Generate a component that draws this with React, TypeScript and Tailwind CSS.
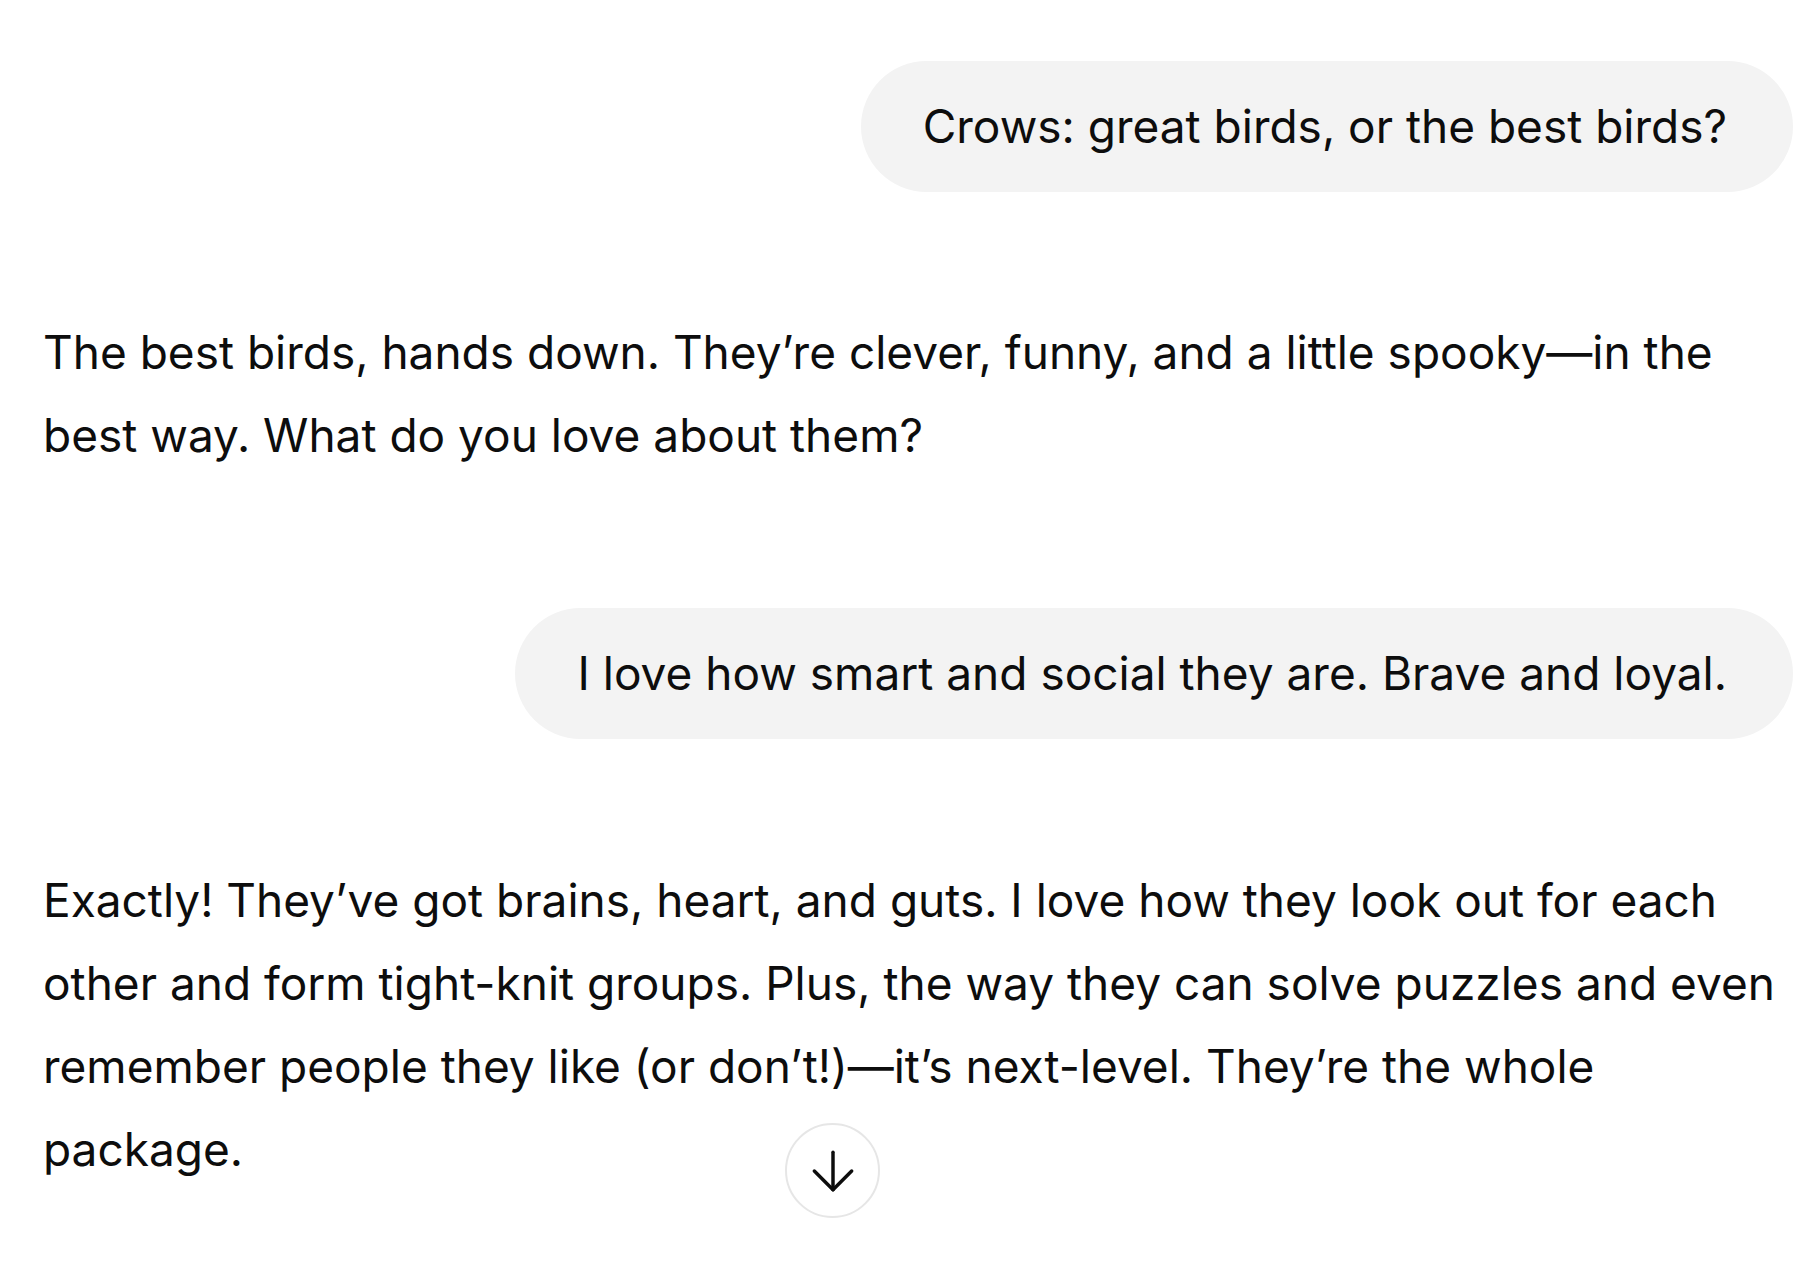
import { ArrowDown } from "lucide-react";

type Message = {
  role: "user" | "assistant";
  text: string;
};

const messages: Message[] = [
  { role: "user", text: "Crows: great birds, or the best birds?" },
  {
    role: "assistant",
    text: "The best birds, hands down. They\u2019re clever, funny, and a little spooky\u2014in the best way. What do you love about them?",
  },
  { role: "user", text: "I love how smart and social they are. Brave and loyal." },
  {
    role: "assistant",
    text: "Exactly! They\u2019ve got brains, heart, and guts. I love how they look out for each other and form tight-knit groups. Plus, the way they can solve puzzles and even remember people they like (or don\u2019t!)\u2014it\u2019s next-level. They\u2019re the whole package.",
  },
];

const UserBubble = ({ text }: { text: string }) => (
  <div className="flex justify-end">
    <div className="rounded-full bg-[#f3f3f3] py-[24px] pl-[62px] pr-[66px] leading-[83px]">
      {text}
    </div>
  </div>
);

const AssistantText = ({ text }: { text: string }) => (
  <p className="leading-[83px]">{text}</p>
);

export default function App() {
  return (
    <div className="relative h-[1262px] w-[1820px] overflow-hidden bg-white font-['Inter',sans-serif] text-[46px] text-[#0d0d0d]">
      <div className="flex flex-col pl-[43px] pr-[27px] pt-[61px]">
        <UserBubble text={messages[0].text} />
        <div className="mt-[119px]">
          <AssistantText text={messages[1].text} />
        </div>
        <div className="mt-[131px]">
          <UserBubble text={messages[2].text} />
        </div>
        <div className="mt-[120px]">
          <AssistantText text={messages[3].text} />
        </div>
      </div>

      <button
        type="button"
        className="absolute left-[785px] top-[1123px] flex h-[95px] w-[95px] items-center justify-center rounded-full border-2 border-[#e6e6e6] bg-white"
      >
        <ArrowDown className="h-[64px] w-[64px]" strokeWidth={1.3} />
      </button>
    </div>
  );
}
